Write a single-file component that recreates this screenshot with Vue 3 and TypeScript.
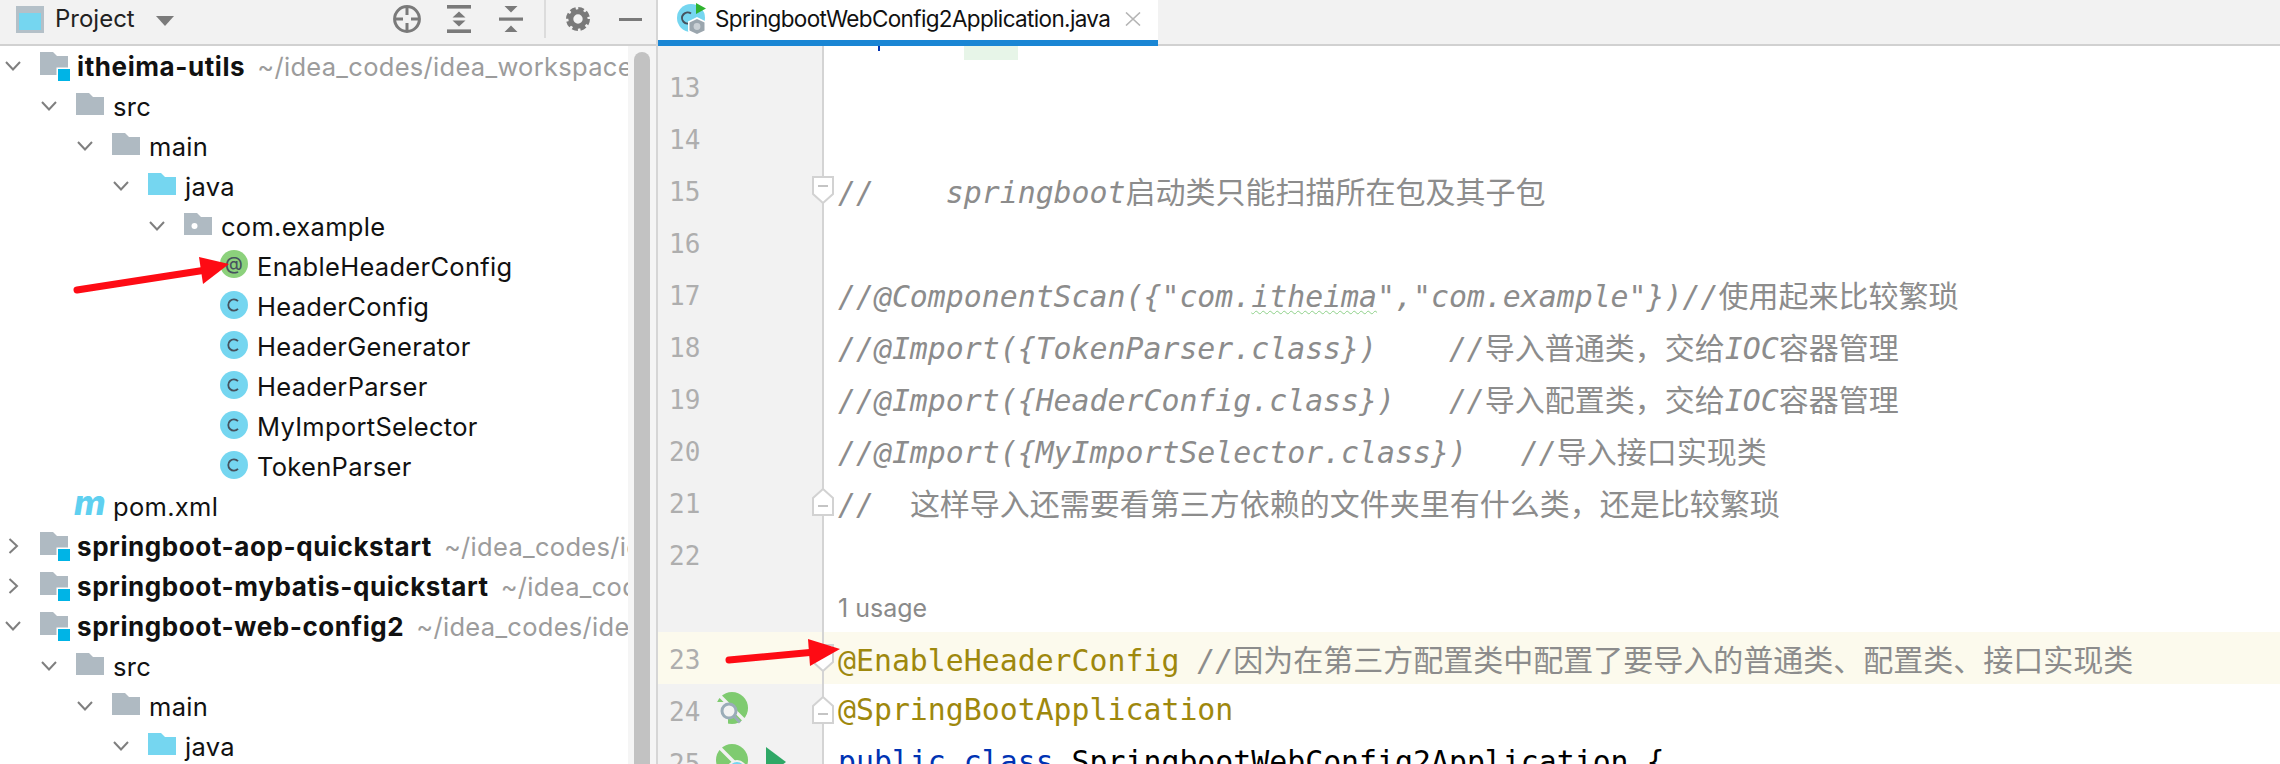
<script setup lang="ts">
type Row = { d: number; chev?: 'down' | 'right'; icon: string; name: string; bold?: boolean; path?: string }
const rows: Row[] = [
  { d: 0, chev: 'down', icon: 'module', name: 'itheima-utils', bold: true, path: '~/idea_codes/idea_workspace/itheima-utils' },
  { d: 1, chev: 'down', icon: 'folder', name: 'src' },
  { d: 2, chev: 'down', icon: 'folder', name: 'main' },
  { d: 3, chev: 'down', icon: 'src', name: 'java' },
  { d: 4, chev: 'down', icon: 'pkg', name: 'com.example' },
  { d: 5, icon: 'anno', name: 'EnableHeaderConfig' },
  { d: 5, icon: 'class', name: 'HeaderConfig' },
  { d: 5, icon: 'class', name: 'HeaderGenerator' },
  { d: 5, icon: 'class', name: 'HeaderParser' },
  { d: 5, icon: 'class', name: 'MyImportSelector' },
  { d: 5, icon: 'class', name: 'TokenParser' },
  { d: 1, icon: 'maven', name: 'pom.xml' },
  { d: 0, chev: 'right', icon: 'module', name: 'springboot-aop-quickstart', bold: true, path: '~/idea_codes/idea_workspace' },
  { d: 0, chev: 'right', icon: 'module', name: 'springboot-mybatis-quickstart', bold: true, path: '~/idea_codes/idea_workspace' },
  { d: 0, chev: 'down', icon: 'module', name: 'springboot-web-config2', bold: true, path: '~/idea_codes/idea_workspace' },
  { d: 1, chev: 'down', icon: 'folder', name: 'src' },
  { d: 2, chev: 'down', icon: 'folder', name: 'main' },
  { d: 3, chev: 'down', icon: 'src', name: 'java' },
]

type Seg = [string, string]
type Line = { n?: number; segs: Seg[]; fold?: 'down' | 'up'; current?: boolean; usage?: boolean; gutter?: string }
const lines: Line[] = [
  { n: 13, segs: [] },
  { n: 14, segs: [] },
  { n: 15, fold: 'down', segs: [['//    springboot', 'c'], ['启动类只能扫描所在包及其子包', 'z']] },
  { n: 16, segs: [] },
  { n: 17, segs: [['//@ComponentScan({"com.', 'c'], ['itheima', 'c wavy'], ['","com.example"})//', 'c'], ['使用起来比较繁琐', 'z']] },
  { n: 18, segs: [['//@Import({TokenParser.class})    //', 'c'], ['导入普通类，交给', 'z'], ['IOC', 'c'], ['容器管理', 'z']] },
  { n: 19, segs: [['//@Import({HeaderConfig.class})   //', 'c'], ['导入配置类，交给', 'z'], ['IOC', 'c'], ['容器管理', 'z']] },
  { n: 20, segs: [['//@Import({MyImportSelector.class})   //', 'c'], ['导入接口实现类', 'z']] },
  { n: 21, fold: 'up', segs: [['//  ', 'c'], ['这样导入还需要看第三方依赖的文件夹里有什么类，还是比较繁琐', 'z']] },
  { n: 22, segs: [] },
  { usage: true, segs: [] },
  { n: 23, fold: 'down', current: true, segs: [['@EnableHeaderConfig', 'a'], [' ', 'p'], ['//', 'c'], ['因为在第三方配置类中配置了要导入的普通类、配置类、接口实现类', 'z']] },
  { n: 24, fold: 'up', gutter: 'search', segs: [['@SpringBootApplication', 'a']] },
  { n: 25, gutter: 'run', segs: [['public class', 'k'], [' SpringbootWebConfig2Application {', 'p']] },
]
</script>

<template>
  <div class="ide">
    <aside class="side">
      <header class="head">
        <svg class="pi" width="28" height="27" viewBox="0 0 28 27">
          <rect width="28" height="27" fill="#b4c0c8" />
          <rect x="3" y="7" width="22" height="17" fill="#75d6f0" />
        </svg>
        <span class="ptitle">Project</span>
        <svg class="caret" width="18" height="10" viewBox="0 0 18 10"><path d="M0 0H18L9 10Z" fill="#7b7b7b" /></svg>
        <div class="tools">
          <svg width="28" height="28" viewBox="0 0 28 28" fill="none" stroke="#7a7a7a" stroke-width="3">
            <circle cx="14" cy="14" r="12.4" />
            <path d="M14 2v8M14 18v8M2 14h8M18 14h8" />
          </svg>
          <svg class="t2" width="24" height="28" viewBox="0 0 24 28" fill="#7a7a7a">
            <rect width="24" height="3.6" />
            <rect y="24.4" width="24" height="3.6" />
            <path d="M12 6.5L18.5 12.5H5.5ZM12 21.5L5.5 15.5H18.5Z" />
          </svg>
          <svg class="t3" width="24" height="26" viewBox="0 0 24 26" fill="#7a7a7a">
            <path d="M5.5 0H18.5L12 6.5ZM12 19.5L18.5 26H5.5Z" />
            <rect y="11.5" width="24" height="3.2" />
          </svg>
          <i class="div"></i>
          <svg class="t4" width="24" height="26" viewBox="0 0 24 26" fill="none" stroke="#7a7a7a">
            <circle cx="12" cy="13" r="7.2" stroke-width="5" />
            <circle cx="12" cy="13" r="10" stroke-width="4" stroke-dasharray="5.4 2.45" />
          </svg>
          <svg class="t5" width="23" height="3" viewBox="0 0 23 3"><rect width="23" height="3" fill="#7a7a7a" /></svg>
        </div>
      </header>
      <div class="treewrap">
        <div class="tree">
          <div v-for="(r, i) in rows" :key="i" class="row" :style="{ paddingLeft: r.d * 36 + 'px' }">
            <span class="chev">
              <svg v-if="r.chev === 'down'" width="16" height="10" viewBox="0 0 16 10" fill="none" stroke="#7f7f7f" stroke-width="2"><path d="M1 1l7 7.5L15 1" /></svg>
              <svg v-else-if="r.chev === 'right'" width="11" height="16" viewBox="0 0 11 16" fill="none" stroke="#7f7f7f" stroke-width="2"><path d="M1.5 1l7.5 7-7.5 7" /></svg>
            </span>
            <svg class="ic" width="30" height="30" viewBox="0 0 30 30">
              <template v-if="r.icon === 'module'">
                <path d="M0 1H13L17 5H28V24H0Z" fill="#afbac2" />
                <rect x="16.5" y="16.5" width="14" height="14" fill="#fff" />
                <rect x="18" y="18" width="12" height="12" fill="#00b4e6" />
              </template>
              <path v-else-if="r.icon === 'folder'" d="M0 2H13L17 6H28V24H0Z" fill="#afbac2" />
              <path v-else-if="r.icon === 'src'" d="M0 2H13L17 6H28V24H0Z" fill="#75d6f0" />
              <template v-else-if="r.icon === 'pkg'">
                <path d="M0 2H13L17 6H28V24H0Z" fill="#afbac2" />
                <circle cx="10.5" cy="15" r="3" fill="#fff" />
              </template>
              <template v-else-if="r.icon === 'anno'">
                <circle cx="14" cy="13" r="14" fill="#8cd17c" />
                <text x="14" y="19" text-anchor="middle" class="ict">@</text>
              </template>
              <template v-else-if="r.icon === 'class'">
                <circle cx="14" cy="14" r="14" fill="#75d6f0" />
                <path d="M18 10.2A5.6 5.6 0 1 0 18 17.8" fill="none" stroke="#46525e" stroke-width="1.8" />
              </template>
              <text v-else-if="r.icon === 'maven'" x="14" y="24" text-anchor="middle" class="mv">m</text>
            </svg>
            <span class="name" :class="{ b: r.bold }">{{ r.name }}</span>
            <span v-if="r.path" class="path">{{ r.path }}</span>
          </div>
        </div>
        <div class="sb"><i></i></div>
      </div>
    </aside>

    <main class="main">
      <div class="tabs">
        <div class="tab">
          <svg width="30" height="34" viewBox="0 0 30 34">
            <circle cx="15" cy="16" r="14" fill="#75d6f0" />
            <path d="M15 11.5A5.6 5.6 0 1 0 15 20.5" fill="none" stroke="#46525e" stroke-width="2" />
            <path d="M20 1L30 6.5L20 12Z" fill="#2fb32f" />
            <path d="M21 15l9 4.5v10L21 34l-9-4.5v-10Z" fill="#fff" />
            <path d="M21 17l7.5 3.5v8L21 32l-7.5-3.5v-8Z" fill="#9ba6ae" />
            <circle cx="21" cy="24.5" r="3.4" fill="#c9d0d5" />
          </svg>
          <span class="tabname">SpringbootWebConfig2Application.java</span>
          <svg class="x" width="16" height="14" viewBox="0 0 16 14" fill="none" stroke="#b5b5b5" stroke-width="1.6"><path d="M1 0.5L15 13.5M15 0.5L1 13.5" /></svg>
        </div>
      </div>
      <div class="editor">
        <div class="line top">
          <div class="gut"></div>
          <div class="code"><i class="caretmark"></i><i class="match"></i></div>
        </div>
        <div v-for="(l, i) in lines" :key="i" class="line" :class="{ cur: l.current }">
          <div class="gut">
            <span class="num">{{ l.n }}</span>
            <svg v-if="l.gutter" class="bean" width="32" height="32" viewBox="0 0 32 32">
              <circle cx="16" cy="16" r="16" fill="#7fcb70" />
              <path d="M3 3L29 29" stroke="#f2f2f2" stroke-width="3.4" />
              <template v-if="l.gutter === 'search'">
                <path d="M0 10h12v22H0Z" fill="#f2f2f2" />
                <circle cx="13" cy="19" r="7" fill="#f2f2f2" stroke="#9aacb8" stroke-width="3" />
                <path d="M18 24l6 6.5" stroke="#9aacb8" stroke-width="3" />
              </template>
              <circle v-else cx="21" cy="26" r="9" fill="#75d6f0" stroke="#f2f2f2" stroke-width="2" />
            </svg>
            <svg v-if="l.gutter === 'run'" class="run" width="20" height="30" viewBox="0 0 20 30"><path d="M0 0L20 15L0 30Z" fill="#2fa866" /></svg>
            <svg v-if="l.fold" class="fold" width="22" height="28" viewBox="0 0 22 28" fill="#fff" stroke="#d2d2d2" stroke-width="2">
              <path v-if="l.fold === 'down'" d="M1 1H21V18L11 27L1 18Z" />
              <path v-else d="M1 27H21V10L11 1L1 10Z" />
              <path :d="l.fold === 'down' ? 'M6 10H16' : 'M6 18H16'" stroke="#c4c4c4" />
            </svg>
          </div>
          <div class="code">
            <span v-if="l.usage" class="usage">1 usage</span>
            <span v-for="(s, j) in l.segs" :key="j" :class="s[1]">{{ s[0] }}</span>
          </div>
        </div>
      </div>
    </main>

    <svg class="arrows" width="2280" height="764" viewBox="0 0 2280 764" fill="#fe0b14">
      <path d="M77 290L206 270" stroke="#fe0b14" stroke-width="7" stroke-linecap="round" />
      <path d="M229 264L199 257L203 284Z" />
      <path d="M729 660L815 652" stroke="#fe0b14" stroke-width="7" stroke-linecap="round" />
      <path d="M840 649L808 639L810 666Z" />
    </svg>
  </div>
</template>

<style>
html, body { margin: 0; background: #fff; }
</style>

<style scoped>
.ide { position: relative; display: flex; width: 2280px; height: 764px; overflow: hidden; background: #fff; font-family: Inter, "Noto Sans", sans-serif; color: #111; }
.side { width: 656px; flex: none; display: flex; flex-direction: column; border-right: 2px solid #d6d6d6; }
.head { height: 38px; flex: none; display: flex; align-items: center; background: #f2f2f2; border-bottom: 2px solid #d1d1d1; padding: 0 14px 6px 16px; }
.ptitle { margin-left: 11px; font-size: 24px; line-height: 38px; color: #222; }
.caret { margin: 4px 0 0 21px; }
.tools { margin-left: auto; display: flex; align-items: center; }
.t2 { margin-left: 26px; }
.t3 { margin-left: 28px; }
.div { width: 2px; height: 38px; background: #dcdcdc; margin: 0 0 0 21px; }
.t4 { margin-left: 20px; }
.t5 { margin-left: 29px; }
.treewrap { flex: 1; display: flex; min-height: 0; }
.tree { flex: 1; min-width: 0; overflow: hidden; }
.row { height: 40px; display: flex; align-items: center; white-space: nowrap; font-size: 25.5px; letter-spacing: 0.3px; }
.chev { width: 26px; margin-right: 14px; flex: none; display: flex; justify-content: center; }
.ic { flex: none; margin-right: 7px; overflow: visible; }
.ict { font: 500 18px Inter, sans-serif; fill: #46525e; }
.mv { font: italic 800 34px Inter, sans-serif; fill: #5fd0f0; }
.name { color: #111; }
.name.b { font-weight: 700; font-size: 26px; letter-spacing: 0.58px; }
.path { margin-left: 12px; color: #9c9c9c; }
.sb { width: 28px; flex: none; background: #f5f5f5; padding: 6px 6px 0; box-sizing: border-box; }
.sb i { display: block; width: 16px; height: 800px; background: #c2c2c2; border-radius: 8px 8px 0 0; }
.main { flex: 1; min-width: 0; display: flex; flex-direction: column; }
.tabs { height: 44px; flex: none; background: #f2f2f2; border-bottom: 2px solid #d1d1d1; }
.tab { width: 500px; height: 46px; box-sizing: border-box; background: #fff; border-bottom: 6px solid #1a86d4; display: flex; align-items: flex-start; }
.tab > svg:first-child { margin: 2px 0 0 18px; flex: none; }
.tabname { margin-left: 9px; font-size: 22.5px; letter-spacing: -0.65px; line-height: 37px; white-space: nowrap; color: #111; }
.x { margin: 12px 0 0 15px; flex: none; }
.editor { flex: 1; min-height: 0; overflow: hidden; }
.line { height: 52px; display: flex; }
.line.top { height: 14px; }
.line.cur, .line.cur .gut { background: #fcfaed; }
.gut { width: 166px; flex: none; box-sizing: border-box; position: relative; background: #f2f2f2; border-right: 2px solid #d4d4d4; height: 100%; }
.num { position: absolute; left: 11px; top: 0; font: 26px/56px "DejaVu Sans Mono", monospace; color: #aeaeae; }
.bean { position: absolute; left: 58px; top: 8px; }
.run { position: absolute; left: 108px; top: 11px; }
.fold { position: absolute; left: 154px; top: 12px; }
.code { flex: 1; min-width: 0; position: relative; padding-left: 14px; white-space: pre; font: 29.85px/52px "DejaVu Sans Mono", "Noto Sans CJK SC", monospace; color: #000; }
.caretmark { position: absolute; left: 54px; top: 0; width: 2px; height: 5px; background: #0033b3; }
.match { position: absolute; left: 140px; top: 0; width: 54px; height: 14px; background: #e7f5e8; }
.c { color: #8c8c8c; font-style: italic; }
.wavy { text-decoration: underline wavy #8fd18a 1px; text-underline-offset: 3px; }
.z { color: #8c8c8c; font-family: "Noto Sans CJK SC", sans-serif; font-size: 30px; }
.a { color: #9e880d; }
.k { color: #0033b3; }
.p { color: #000; }
.usage { font: 25px/56px Inter, sans-serif; color: #8a8a8a; }
.arrows { position: absolute; left: 0; top: 0; pointer-events: none; }
</style>
